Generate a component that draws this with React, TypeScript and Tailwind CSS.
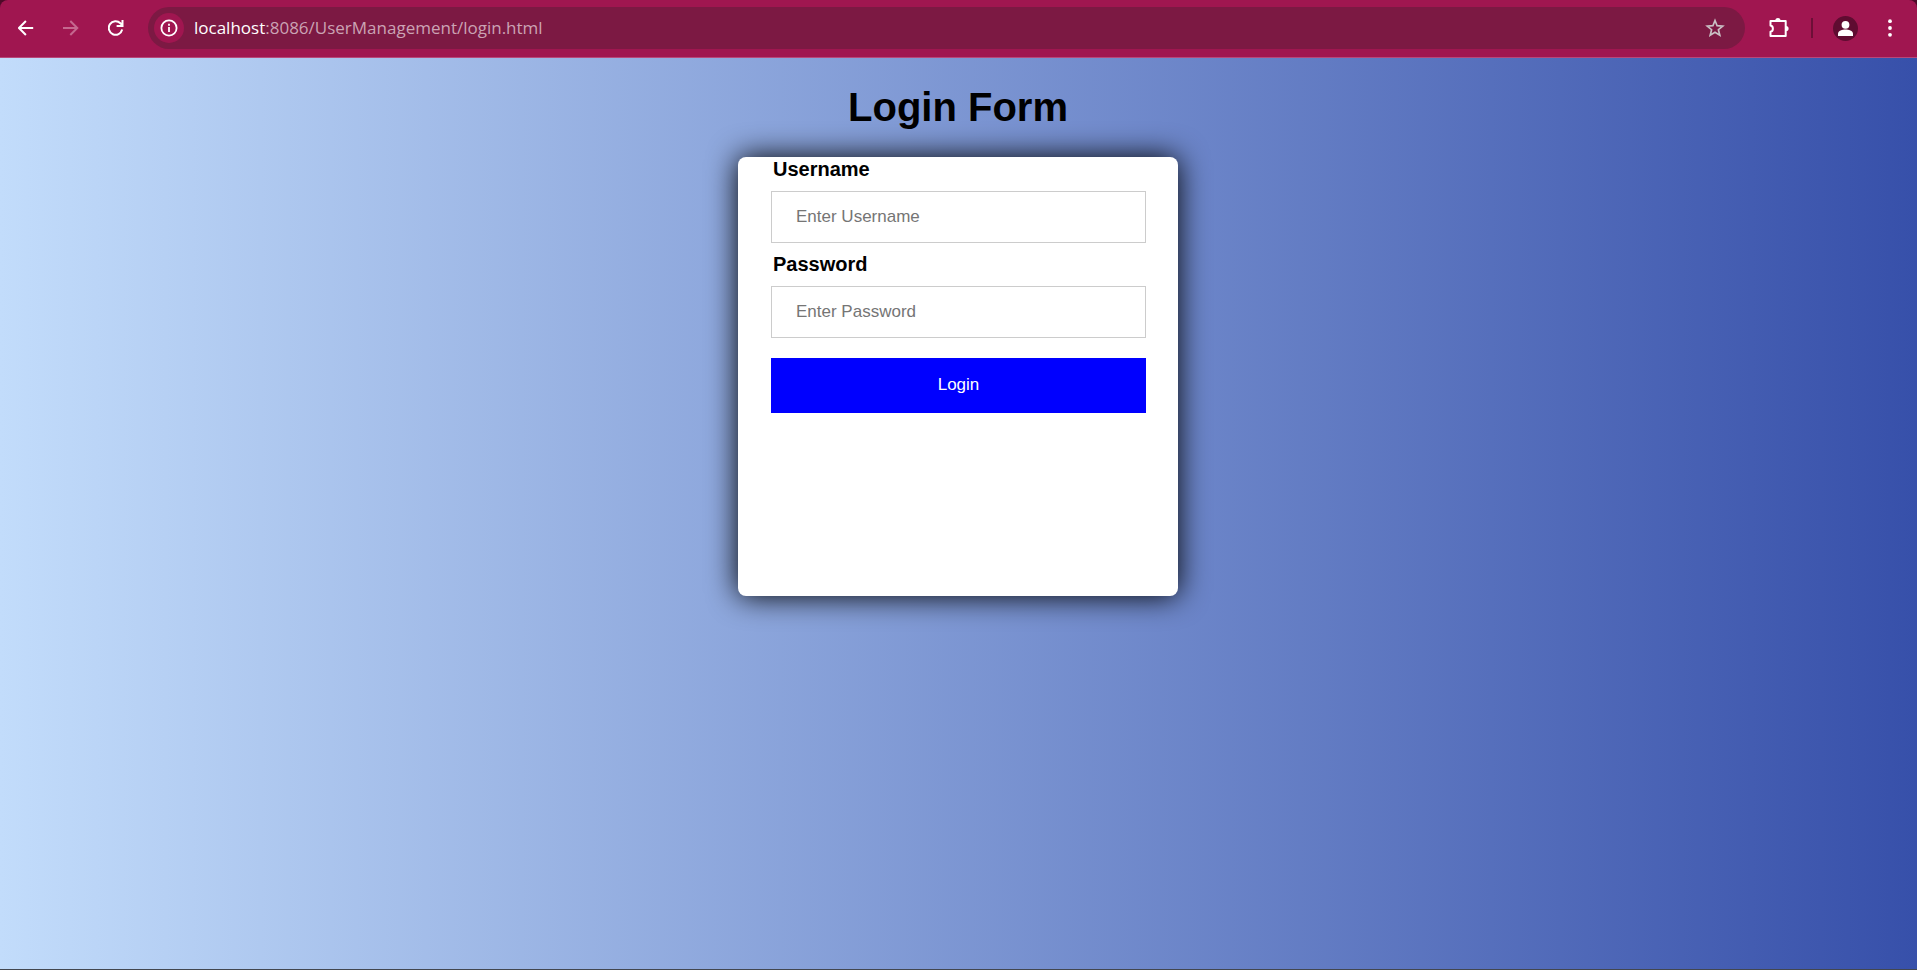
import type { ReactNode } from "react";

function ToolButton({ label, children }: { label: string; children: ReactNode }) {
  return (
    <button type="button" aria-label={label} className="flex size-9 shrink-0 items-center justify-center text-white">
      {children}
    </button>
  );
}

function BrowserBar() {
  return (
    <div className="bg-[#4d0a28]">
      <header className="flex h-[58px] items-center rounded-t-lg border-b border-[#b8487a] bg-[#a01650] pr-[9px] pb-px pl-2">
        <nav className="flex gap-[9px]">
          <ToolButton label="Back">
            <svg viewBox="0 0 16 16" className="size-4" fill="none" stroke="currentColor" strokeWidth="2">
              <path d="M15.2 8H1.5M7.9 1 .9 8l7 7" />
            </svg>
          </ToolButton>
          <ToolButton label="Forward">
            <svg viewBox="0 0 16 16" className="size-4 text-[#c5688f]" fill="none" stroke="currentColor" strokeWidth="2">
              <path d="M0 8h13.7M7.3 1l7 7-7 7" />
            </svg>
          </ToolButton>
          <ToolButton label="Reload">
            <svg viewBox="0 0 16 16" className="size-4" fill="none" stroke="currentColor" strokeWidth="2">
              <path d="M14.2 9.6A6.8 6.8 0 1 1 12.4 3.2L14.2 5M14.5 0v5.9H8.6" />
            </svg>
          </ToolButton>
        </nav>

        <div className="ml-[14px] flex h-[42px] flex-1 items-center rounded-full bg-[#7c1943] pr-3 pl-[6px]">
          <button
            type="button"
            aria-label="Site information"
            className="flex size-[30px] items-center justify-center rounded-full bg-[#a01650] text-white"
          >
            <svg viewBox="0 0 18 18" className="size-[18px]" fill="none" stroke="currentColor" strokeWidth="1.8">
              <circle cx="9" cy="9" r="7.6" />
              <path d="M9 8v5M9 4.8v1.9" />
            </svg>
          </button>
          <p className="ml-[10px] flex-1 font-['Open_Sans',sans-serif] text-[17px] leading-6 text-[#cba3b4]">
            <span className="text-white">localhost</span>:8086/UserManagement/login.html
          </p>
          <button
            type="button"
            aria-label="Bookmark this page"
            className="flex size-9 items-center justify-center text-[#c9c0c4]"
          >
            <svg viewBox="0 0 20 20" className="size-5" fill="none" stroke="currentColor" strokeWidth="1.7">
              <path d="m10 2.5 2.1 5.2 5.6.4-4.3 3.6 1.4 5.5L10 14.2l-4.8 3 1.4-5.5-4.3-3.6 5.6-.4z" />
            </svg>
          </button>
        </div>

        <div className="ml-4 flex items-center">
          <ToolButton label="Extensions">
            <svg viewBox="0 0 22 22" className="size-[22px]" fill="none" stroke="currentColor" strokeWidth="2" strokeLinejoin="round">
              <path d="M2.5 4h15.2v15H2.5v-4.2c3.2-.6 3.2-5.6 0-6.2z" />
              <path d="M7.3 3.6a2.6 2.6 0 0 1 5.2 0zM18 8.9a2.6 2.6 0 0 1 0 5.2z" fill="currentColor" stroke="none" />
            </svg>
          </ToolButton>
          <span className="ml-[14px] h-5 w-[2px] bg-[#6d0f37]" />
          <span className="w-[14px]" />
          <ToolButton label="Profile">
            <svg viewBox="0 0 25 25" className="size-[25px]">
              <circle cx="12.5" cy="12.5" r="12.5" fill="#5f0c31" />
              <circle cx="12.5" cy="8.8" r="3.9" fill="white" />
              <path d="M5 20v-2.2c0-3 4.5-4.2 7.5-4.2s7.5 1.2 7.5 4.2V20z" fill="white" />
            </svg>
          </ToolButton>
          <span className="w-[9px]" />
          <ToolButton label="Menu">
            <svg viewBox="0 0 18 18" className="size-[18px]" fill="currentColor">
              <circle cx="9" cy="2.2" r="1.9" />
              <circle cx="9" cy="9" r="1.9" />
              <circle cx="9" cy="15.8" r="1.9" />
            </svg>
          </ToolButton>
        </div>
      </header>
    </div>
  );
}

function Field({ id, label, type, placeholder }: { id: string; label: string; type: string; placeholder: string }) {
  return (
    <div className="mb-[9px]">
      <label htmlFor={id} className="block pl-0.5 text-xl leading-6 font-bold">
        {label}
      </label>
      <input
        id={id}
        type={type}
        placeholder={placeholder}
        className="mt-[10px] block h-[52px] w-full border border-[#ccc] bg-white px-6 text-[17px] text-black placeholder:text-[#757575]"
      />
    </div>
  );
}

export default function App() {
  return (
    <div className="flex min-h-screen flex-col font-['Liberation_Sans',Arial,sans-serif] text-black">
      <BrowserBar />
      <main className="flex flex-1 flex-col items-center border-b border-[#43474f] bg-linear-to-r/srgb from-[#c2dcfb] to-[#3750aa] pr-px">
        <h1 className="mt-[26px] text-[40px] leading-[46px] font-bold">Login Form</h1>
        <form
          className="mt-[27px] mb-8 min-h-[439px] w-full max-w-[440px] rounded-lg bg-white pr-8 pl-[33px] shadow-[0_0_30px_black]"
          onSubmit={(event) => event.preventDefault()}
        >
          <Field id="username" label="Username" type="text" placeholder="Enter Username" />
          <Field id="password" label="Password" type="password" placeholder="Enter Password" />
          <button type="submit" className="mt-5 block h-[55px] w-full bg-[#0000ff] pb-0.5 text-[17px] text-white">
            Login
          </button>
        </form>
      </main>
    </div>
  );
}
